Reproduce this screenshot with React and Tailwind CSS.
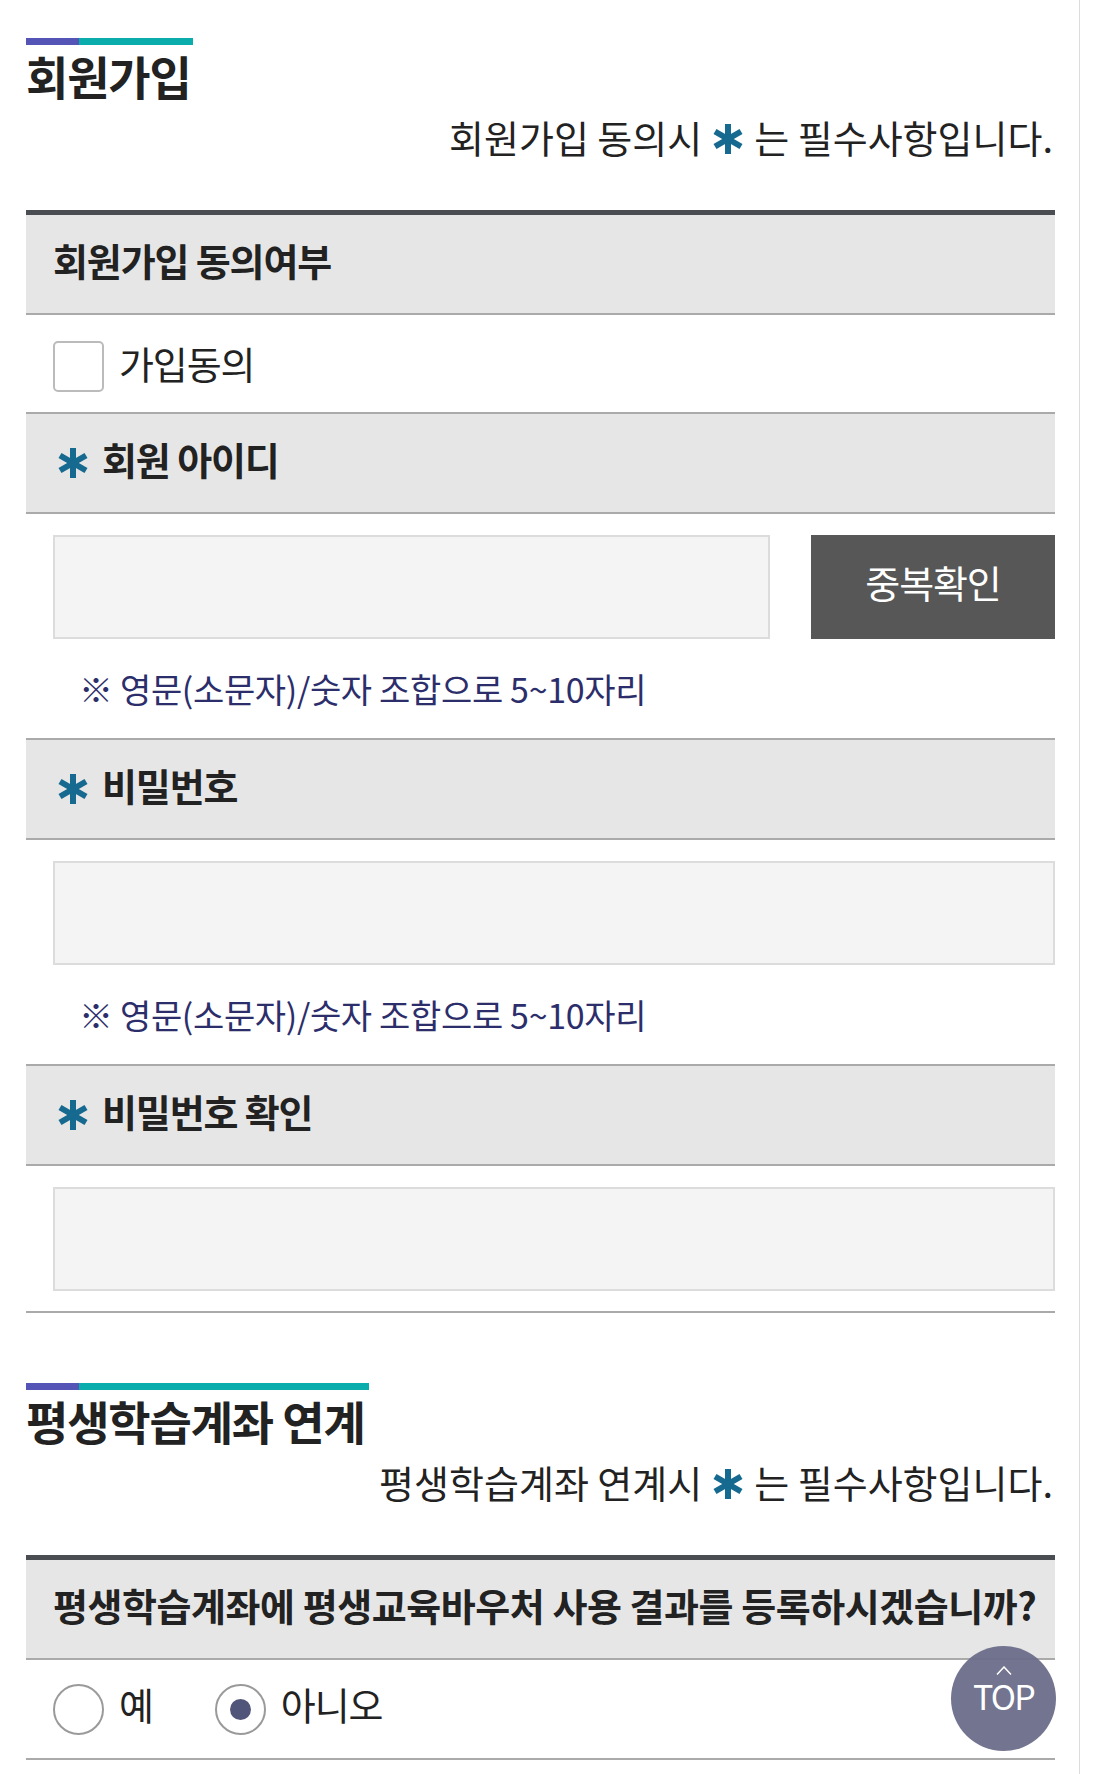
import React, { useState } from "react";

/* ---------------- Required mark ---------------- */
const Star = ({ className = "" }) => (
  <svg viewBox="0 0 32 32" className={className}>
    <g stroke="#16698f" strokeWidth="6">
      <line x1="16" y1="1" x2="16" y2="31" />
      <line x1="3" y1="8.5" x2="29" y2="23.5" />
      <line x1="3" y1="23.5" x2="29" y2="8.5" />
    </g>
  </svg>
);

/* ---------------- Section title ---------------- */
const SectionTitle = ({ title, desc, barWidth }) => (
  <div>
    <div className={`flex h-[7px] ${barWidth}`}>
      <div className="w-[53px] bg-[#5453b6]" />
      <div className="flex-1 bg-[#0aacac]" />
    </div>
    <h2 className="mt-[7px] text-[46px] font-bold leading-none tracking-[-0.025em] text-[#222]">
      {title}
    </h2>
    <p className="mt-[20px] flex items-center justify-end pr-[2px] text-[38px] leading-none text-[#222]">
      <span>{desc}</span>
      <Star className="mx-[10px] mt-[4px] h-[32px] w-[32px]" />
      <span>는 필수사항입니다.</span>
    </p>
  </div>
);

const Head = ({ children, required, first, tracking = "tracking-[-0.03em]" }) => (
  <div
    className={`flex items-center bg-[#e6e6e6] pl-[27px] pb-[8px] border-b-2 border-b-[#aaa] ${
      first
        ? "h-[105px] border-t-[5px] border-t-[#4a4e52]"
        : "h-[102px] border-t-2 border-t-[#aaa]"
    }`}
  >
    {required && <Star className="ml-[4px] mr-[13px] mt-[8px] h-[32px] w-[32px]" />}
    <span className={`text-[38px] font-bold leading-none text-[#222] ${tracking}`}>
      {children}
    </span>
  </div>
);

const Note = () => (
  <p className="mt-[24px] flex h-[50px] items-center pl-[26px] text-[34px] tracking-[-0.01em] text-[#2c2e6b]">
    ※ 영문(소문자)/숫자 조합으로 5~10자리
  </p>
);

const Field = () => (
  <input
    type="text"
    className="h-[104px] w-full border-2 border-[#dcdcdc] bg-[#f4f4f4] outline-none"
  />
);

const Radio = ({ checked, label, onClick, className = "" }) => (
  <label className={`flex items-center ${className}`} onClick={onClick}>
    <span className="flex h-[51px] w-[51px] items-center justify-center rounded-full border-2 border-[#9a9a9a] bg-white">
      {checked && <span className="h-[21px] w-[21px] rounded-full bg-[#52557a]" />}
    </span>
    <span className="ml-[15px] pb-[10px] text-[38px] leading-none tracking-[-0.03em] text-[#222]">
      {label}
    </span>
  </label>
);

export default function App() {
  const [agree, setAgree] = useState(false);
  const [link, setLink] = useState("no");

  return (
    <div className="relative h-[1774px] w-[1107px] overflow-hidden bg-white font-['Noto_Sans_CJK_KR','Noto_Sans',sans-serif]">
      <div className="h-full w-[1080px] border-r border-r-[#dcdcdc] pl-[26px] pr-[24px] pt-[38px]">
        {/* 회원가입 */}
        <SectionTitle title="회원가입" desc="회원가입 동의시" barWidth="w-[167px]" />

        <div className="mt-[54px]">
          <Head first>회원가입 동의여부</Head>
          <div className="flex h-[97px] items-center pl-[27px]">
            <button
              onClick={() => setAgree(!agree)}
              className="mt-[6px] h-[51px] w-[51px] rounded-[5px] border-2 border-[#bbb] bg-white"
            />
            <span className="ml-[15px] pb-[2px] text-[38px] leading-none tracking-[-0.03em] text-[#222]">
              가입동의
            </span>
          </div>

          <Head required>회원 아이디</Head>
          <div className="pl-[27px] pt-[21px] pb-[25px]">
            <div className="flex">
              <div className="flex-1">
                <Field />
              </div>
              <button className="ml-[41px] h-[104px] w-[244px] bg-[#575757] pb-[12px] text-[38px] tracking-[-0.03em] text-white">
                중복확인
              </button>
            </div>
            <Note />
          </div>

          <Head required>비밀번호</Head>
          <div className="pl-[27px] pt-[21px] pb-[25px]">
            <Field />
            <Note />
          </div>

          <Head required>비밀번호 확인</Head>
          <div className="border-b-2 border-b-[#aaa] pl-[27px] pt-[21px] pb-[20px]">
            <Field />
          </div>
        </div>

        {/* 평생학습계좌 연계 */}
        <div className="mt-[70px]">
          <SectionTitle title="평생학습계좌 연계" desc="평생학습계좌 연계시" barWidth="w-[343px]" />
        </div>

        <div className="mt-[54px]">
          <Head first tracking="tracking-[-0.012em]">
            평생학습계좌에 평생교육바우처 사용 결과를 등록하시겠습니까?
          </Head>
          <div className="flex h-[100px] items-center border-b-2 border-b-[#aaa] pl-[27px]">
            <Radio label="예" checked={link === "yes"} onClick={() => setLink("yes")} />
            <Radio
              label="아니오"
              checked={link === "no"}
              onClick={() => setLink("no")}
              className="ml-[62px]"
            />
          </div>
        </div>
      </div>

      {/* TOP */}
      <button className="absolute left-[951px] top-[1646px] flex h-[105px] w-[105px] flex-col items-center rounded-full bg-[#6b6d89]/95 pt-[20px] text-white">
        <svg viewBox="0 0 16 9" className="h-[9px] w-[16px]" fill="none" stroke="white" strokeWidth="1.5">
          <path d="M1 8.5 L8 1 L15 8.5" />
        </svg>
        <span className="mt-[4px] text-[34px] leading-none tracking-[-0.05em]">TOP</span>
      </button>
    </div>
  );
}
